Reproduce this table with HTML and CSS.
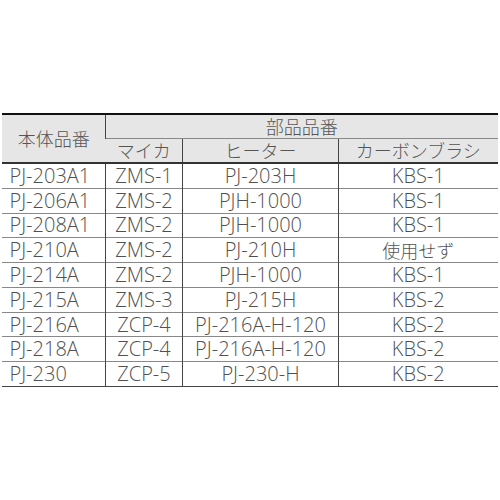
FILE: index.html
```html
<!DOCTYPE html>
<html lang="ja">
<head>
<meta charset="utf-8">
<link rel="stylesheet" href="styles.css">
</head>
<body>
<div class="page">
<table class="parts">
<colgroup>
<col class="c1"><col class="c2"><col class="c3"><col class="c4">
</colgroup>
<thead>
<tr class="h1"><th rowspan="2" class="model">本体品番</th><th colspan="3">部品品番</th></tr>
<tr class="h2"><th>マイカ</th><th>ヒーター</th><th>カーボンブラシ</th></tr>
</thead>
<tbody>
<tr><td class="model">PJ-203A1</td><td>ZMS-1</td><td>PJ-203H</td><td>KBS-1</td></tr>
<tr><td class="model">PJ-206A1</td><td>ZMS-2</td><td>PJH-1000</td><td>KBS-1</td></tr>
<tr><td class="model">PJ-208A1</td><td>ZMS-2</td><td>PJH-1000</td><td>KBS-1</td></tr>
<tr><td class="model">PJ-210A</td><td>ZMS-2</td><td>PJ-210H</td><td class="ja">使用せず</td></tr>
<tr><td class="model">PJ-214A</td><td>ZMS-2</td><td>PJH-1000</td><td>KBS-1</td></tr>
<tr><td class="model">PJ-215A</td><td>ZMS-3</td><td>PJ-215H</td><td>KBS-2</td></tr>
<tr><td class="model">PJ-216A</td><td>ZCP-4</td><td>PJ-216A-H-120</td><td>KBS-2</td></tr>
<tr><td class="model">PJ-218A</td><td>ZCP-4</td><td>PJ-216A-H-120</td><td>KBS-2</td></tr>
<tr><td class="model">PJ-230</td><td>ZCP-5</td><td>PJ-230-H</td><td>KBS-2</td></tr>
</tbody>
</table>
</div>
</body>
</html>
```
FILE: styles.css
```css
html, body {
  margin: 0;
  padding: 0;
  background: #fff;
}
.page {
  height: 500px;
  display: flex;
  align-items: center;
  justify-content: center;
}
.parts {
  width: 495px;
  border-collapse: collapse;
  table-layout: fixed;
  font-family: "Open Sans", "Noto Sans CJK JP", sans-serif;
  font-weight: 300;
  font-size: 20px;
  color: #505050;
  border-top: 2px solid #111;
  border-bottom: 1px solid #444;
}
.c1 { width: 103px; }
.c2 { width: 77px; }
.c3 { width: 156px; }
.c4 { width: 159px; }
.parts th,
.parts td {
  padding: 0;
  line-height: 22px;
  text-align: center;
  white-space: nowrap;
  border-left: 1px solid #444;
  border-top: 1px solid #888;
}
.parts th {
  font-family: "Noto Sans CJK JP", sans-serif;
  font-weight: 300;
  font-size: 18px;
  color: #555;
  background: #e6e6e6;
  height: 23px;
}
.parts td {
  height: 23.8px;
}
.parts td.ja {
  font-family: "Noto Sans CJK JP", sans-serif;
  font-size: 18px;
  color: #555;
}
.parts tr > :first-child {
  border-left: none;
}
.parts .h1 th {
  border-top: 2px solid #111;
}
.parts .h2 th {
  border-top: 1px solid #888;
  border-bottom: 2px solid #333;
}
.parts th.model {
  border-bottom: 2px solid #333;
}
.parts td.model {
  text-align: left;
  padding-left: 7px;
}
```
